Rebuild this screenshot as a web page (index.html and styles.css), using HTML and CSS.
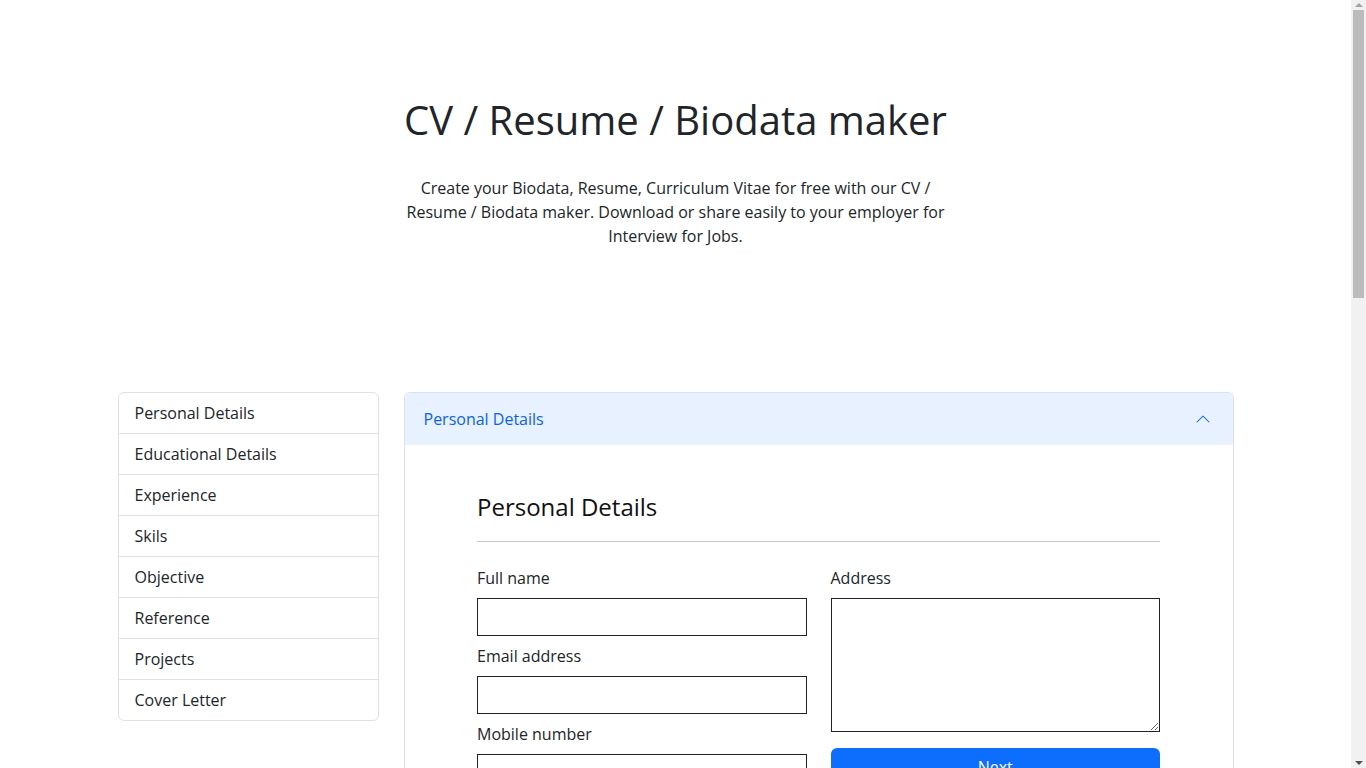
FILE: index.html
```html
<!DOCTYPE html>
<html lang="en">
<head>
<meta charset="utf-8">
<title>CV / Resume / Biodata maker</title>
<link rel="stylesheet" href="styles.css">
</head>
<body>
<header class="hero">
  <h1 class="hero-title">CV / Resume / Biodata maker</h1>
  <div class="hero-text">
    <p>Create your Biodata, Resume, Curriculum Vitae for free with our CV / Resume / Biodata maker. Download or share easily to your employer for Interview for Jobs.</p>
  </div>
</header>
<main class="container">
  <nav class="list-group">
    <a class="list-item">Personal Details</a>
    <a class="list-item">Educational Details</a>
    <a class="list-item">Experience</a>
    <a class="list-item">Skils</a>
    <a class="list-item">Objective</a>
    <a class="list-item">Reference</a>
    <a class="list-item">Projects</a>
    <a class="list-item">Cover Letter</a>
  </nav>
  <section class="accordion">
    <div class="accordion-header">
      <span>Personal Details</span>
      <svg class="chevron" width="16" height="16" viewBox="0 0 16 16" fill="#0c63e4"><path fill-rule="evenodd" d="M1.646 11.354a.5.5 0 0 0 .708 0L8 5.707l5.646 5.647a.5.5 0 0 0 .708-.708l-6-6a.5.5 0 0 0-.708 0l-6 6a.5.5 0 0 0 0 .708z"/></svg>
    </div>
    <div class="accordion-body">
      <div class="form-wrap">
        <h4 class="form-title">Personal Details</h4>
        <hr class="divider">
        <div class="form-grid">
          <div class="form-col">
            <label class="label">Full name</label>
            <input class="field" type="text">
            <label class="label">Email address</label>
            <input class="field" type="email">
            <label class="label">Mobile number</label>
            <input class="field" type="text">
          </div>
          <div class="form-col">
            <label class="label">Address</label>
            <textarea class="field area"></textarea>
            <button class="btn">Next</button>
          </div>
        </div>
      </div>
    </div>
  </section>
</main>
<div class="scrollbar" aria-hidden="true">
  <span class="sb-arrow sb-up"></span>
  <span class="sb-thumb"></span>
  <span class="sb-space"></span>
  <span class="sb-arrow sb-down"></span>
</div>
</body>
</html>
```
FILE: styles.css
```css
* { box-sizing: border-box; }
html, body { margin: 0; }
body {
  padding-right: 15px;
  font-family: "Open Sans", "Noto Sans", sans-serif;
  font-size: 16px;
  line-height: 24px;
  color: #212529;
  background: #fff;
}
.scrollbar {
  position: fixed;
  top: 0;
  right: 0;
  width: 15px;
  height: 100vh;
  background: #f1f1f1;
  display: flex;
  flex-direction: column;
  align-items: center;
}
.sb-arrow {
  width: 0;
  height: 0;
  border-left: 4px solid transparent;
  border-right: 4px solid transparent;
  margin: 3px 0;
}
.sb-up { border-bottom: 4px solid #a3a3a3; }
.sb-down { border-top: 4px solid #505050; }
.sb-thumb {
  width: 11px;
  height: 288px;
  background: #bcbcbc;
}
.sb-space { flex: 1; }
.hero {
  margin: 48px 0 72px;
  padding: 48px 24px;
  text-align: center;
}
.hero-title {
  margin: 0 0 32px;
  font-size: 40px;
  font-weight: 500;
  line-height: 48px;
}
.hero-text {
  max-width: 546px;
  margin: 0 auto;
}
.hero-text p { margin: 0 0 24px; }
.container {
  max-width: 1116px;
  margin: 0 auto;
  display: grid;
  grid-template-columns: 261px 1fr;
  column-gap: 25px;
  align-items: start;
  padding-bottom: 40px;
}
.list-group {
  border: 1px solid #dee2e6;
  border-radius: 6px;
  overflow: hidden;
}
.list-item {
  display: block;
  padding: 8px 16px;
  border-bottom: 1px solid #dee2e6;
  color: #212529;
}
.list-item:last-child { border-bottom: 0; }
.accordion {
  border: 1px solid #dee2e6;
  border-radius: 6px;
  overflow: hidden;
}
.accordion-header {
  display: flex;
  justify-content: space-between;
  align-items: center;
  padding: 14px 22px 14px 19px;
  background: #e7f1ff;
  color: #0c63e4;
}
.accordion-body {
  padding: 47px 20px 40px;
}
.form-wrap {
  max-width: 683px;
  margin: 0 auto;
}
.form-title {
  margin: 0;
  font-size: 24px;
  font-weight: 400;
  line-height: 29px;
  color: #111;
}
.divider {
  margin: 20px 0 24px;
  border: 0;
  border-top: 1px solid #c4c4c4;
}
.form-grid {
  display: grid;
  grid-template-columns: 1fr 1fr;
  column-gap: 24px;
}
.form-col {
  display: flex;
  flex-direction: column;
}
.label {
  display: block;
  margin-bottom: 8px;
}
.field {
  display: block;
  width: 100%;
  height: 38px;
  margin: 0 0 8px;
  border: 1px solid #222;
  border-radius: 0;
  font: inherit;
  background: #fff;
}
.area {
  height: 134px;
  margin-bottom: 16px;
}
.btn {
  height: 38px;
  width: 100%;
  border: 0;
  border-radius: 6px;
  background: #0d6efd;
  color: #fff;
  font: inherit;
}
```
